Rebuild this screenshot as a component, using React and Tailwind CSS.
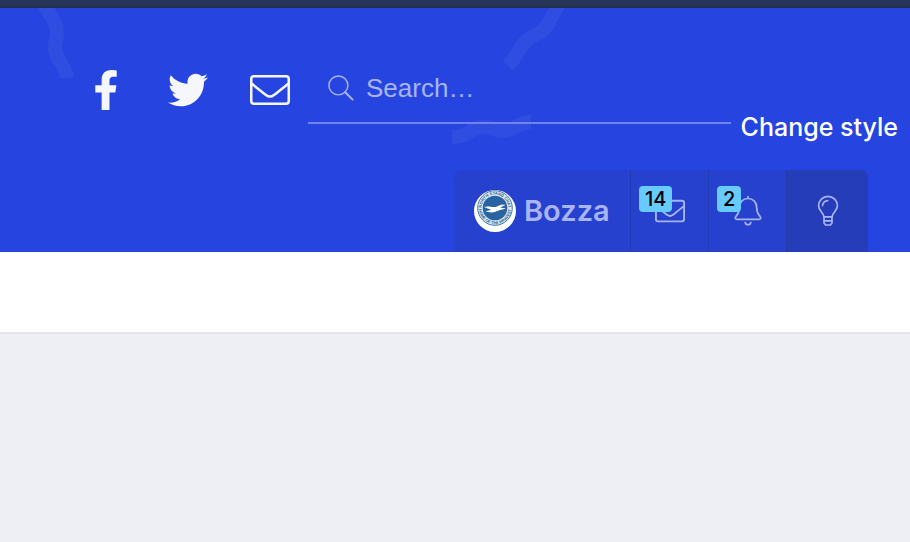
import { FaFacebookF, FaTwitter } from "react-icons/fa";

function Squiggles() {
  return (
    <svg className="pointer-events-none absolute left-0 top-0" width="910" height="244" viewBox="0 8 910 244" fill="none" stroke="#2f4de1" strokeWidth="14" aria-hidden="true">
      <path d="M43 1C47 14 57 18 57 33C57 40 53 45 56 54C59 63 65 65 67 78" />
      <path d="M562 0C558 4 552 17 548 24C541 36 534 32 525 42C518 49 517 57 508 66" />
      <path d="M452 137C470 137 468 128 482 127C491 126 495 132 505 131C515 130 518 122 531 122" />
    </svg>
  );
}

function EnvelopeIcon({ className }) {
  return (
    <svg className={className} viewBox="0 0 40 40" fill="none" stroke="currentColor" strokeWidth="2.5" strokeLinejoin="round" aria-hidden="true">
      <rect x="1.25" y="6.25" width="37.5" height="27.5" rx="2.7" />
      <path d="M1.5 13.5C6 17.3 13 22.6 16 25C18.8 27.2 21.2 27.2 24 25C27 22.6 34 17.3 38.5 13.5" />
    </svg>
  );
}

function SearchIcon() {
  return (
    <svg className="size-[26px] shrink-0 text-[#a8b4f3]" viewBox="0 0 28 28" fill="none" stroke="currentColor" strokeWidth="1.6" strokeLinecap="round" aria-hidden="true">
      <circle cx="11.2" cy="11.2" r="10.2" />
      <path d="M18.5 18.5L26.5 26.5" strokeWidth="2.2" />
    </svg>
  );
}

function BellIcon() {
  return (
    <svg className="h-8 w-7" viewBox="0 0 28 32" fill="none" stroke="currentColor" strokeWidth="1.7" strokeLinecap="round" strokeLinejoin="round" aria-hidden="true">
      <path d="M14 1.5V3.5M14 3.5C8.7 3.5 5.3 7.5 5.3 12.5C5.3 18.5 3.5 19.5 1.9 21.5C.7 23 1.4 24.3 2.8 24.3H25.2C26.600 24.3 27.3 23 26.1 21.5C24.5 19.5 22.7 18.5 22.7 12.5C22.7 7.5 19.3 3.5 14 3.5Z" />
      <path d="M11.2 27.5C12 30.5 16 30.5 16.8 27.5" />
    </svg>
  );
}

function BulbIcon() {
  return (
    <svg className="h-8 w-6" viewBox="0 0 24 32" fill="none" stroke="currentColor" strokeWidth="1.7" strokeLinecap="round" strokeLinejoin="round" aria-hidden="true">
      <path d="M8 21.800C7.500 17.500 2.600 16 2.600 10.800A9.400 9.400 0 0 1 21.400 10.800C21.400 16 16.500 17.500 16 21.800Z" />
      <path d="M6.600 10.600C6.600 7.700 8.900 5.600 11.700 5.600" />
      <path d="M8 21.800V28L9.600 30H14.400L16 28V21.800M8 25.900H16" />
    </svg>
  );
}

function Avatar() {
  return (
    <svg className="size-[42px] shrink-0 rounded-full bg-white" viewBox="0 0 42 42" role="img" aria-label="Club crest">
      <defs>
        <path id="crest-top" d="M7.700 18A13.300 13.300 0 0 1 34.300 18" />
        <path id="crest-bottom" d="M4.800 18A16.200 16.200 0 0 0 37.200 18" />
      </defs>
      <circle cx="21" cy="18" r="17.300" fill="#dce9f2" stroke="#3b78a9" strokeWidth="1" />
      <circle cx="21" cy="18" r="12.300" fill="#2864a3" />
      <g fill="#315f8b" fontFamily="Liberation Sans, sans-serif" fontSize="4" fontWeight="700" textAnchor="middle">
        <text><textPath href="#crest-top" startOffset="50%">NORTH STAND CHAT</textPath></text>
        <text><textPath href="#crest-bottom" startOffset="50%">HOME OF THE BRAVEST</textPath></text>
      </g>
      <path d="M10 17C14 15.500 17 17.200 21 17C24 16.500 25 14 31.500 14.800C29.500 16.600 27.500 17 26 17.600L32 18.600C28 19.600 26 20.200 23.500 21C20 23 15 22.600 11.500 21.200L17 20C15 18.500 12.500 18.300 10 17Z" fill="#fff" />
      <path d="M23 17C25 15.500 27 14.800 30.500 15.200" stroke="#d6c5a5" strokeWidth=".8" fill="none" />
    </svg>
  );
}

function AlertLink({ label, count, children }) {
  return (
    <a href="#" aria-label={label} className="relative flex w-[78px] items-center justify-center border-l border-[#243ab4]">
      {children}
      <span className="absolute left-2 top-4 flex h-[26px] items-center rounded bg-[#67cbff] px-1.5 text-xl font-medium leading-none text-black">{count}</span>
    </a>
  );
}

export default function App() {
  return (
    <div className="flex min-h-screen flex-col bg-[#eeeff5] font-['Inter',sans-serif]">
      <div className="h-2 border-b-2 border-[#202d4b] bg-[#273657]" />
      <header className="relative bg-[#2645e0]">
        <Squiggles />
        <div className="relative flex items-start pr-3 pt-10">
          <nav aria-label="Social" className="flex shrink-0 items-center gap-[42px] pl-[86px] pt-[22px] text-[#f5f7fc]">
            <a href="#" aria-label="Facebook" className="flex w-10 justify-center"><FaFacebookF className="size-10" /></a>
            <a href="#" aria-label="Twitter"><FaTwitter className="size-10" /></a>
            <a href="#" aria-label="Contact us"><EnvelopeIcon className="size-10" /></a>
          </nav>
          <label className="ml-[18px] flex h-[76px] min-w-0 flex-1 items-center gap-3 border-b-2 border-[#6f84ea] pl-5 pt-1.5">
            <SearchIcon />
            <input type="search" aria-label="Search" placeholder="Search…" className="min-w-0 flex-1 bg-transparent font-['Liberation_Sans',sans-serif] text-[26px] text-white outline-none placeholder:text-[#a8b4f3]" />
          </label>
          <a href="#" className="ml-2.5 shrink-0 pt-[63px] text-[25px] font-medium leading-8 text-white">Change style</a>
        </div>
        <nav aria-label="Account" className="relative mr-[42px] mt-[27px] flex justify-end text-[#a8b4f3]">
          <div className="flex h-[82px] overflow-hidden rounded-t-lg bg-[#2641cd]">
            <a href="#" className="flex w-[176px] items-center gap-2 pl-5 text-[29px] font-semibold"><Avatar />Bozza</a>
            <AlertLink label="Conversations" count="14"><EnvelopeIcon className="size-[30px]" /></AlertLink>
            <AlertLink label="Alerts" count="2"><BellIcon /></AlertLink>
            <button type="button" aria-label="Toggle light mode" className="flex w-[82px] items-center justify-center border-l border-[#2438a8] bg-[#253db9]"><BulbIcon /></button>
          </div>
        </nav>
      </header>
      <div className="h-[82px] border-b-2 border-[#e5e5e7] bg-white" />
      <main className="flex-1" />
    </div>
  );
}
